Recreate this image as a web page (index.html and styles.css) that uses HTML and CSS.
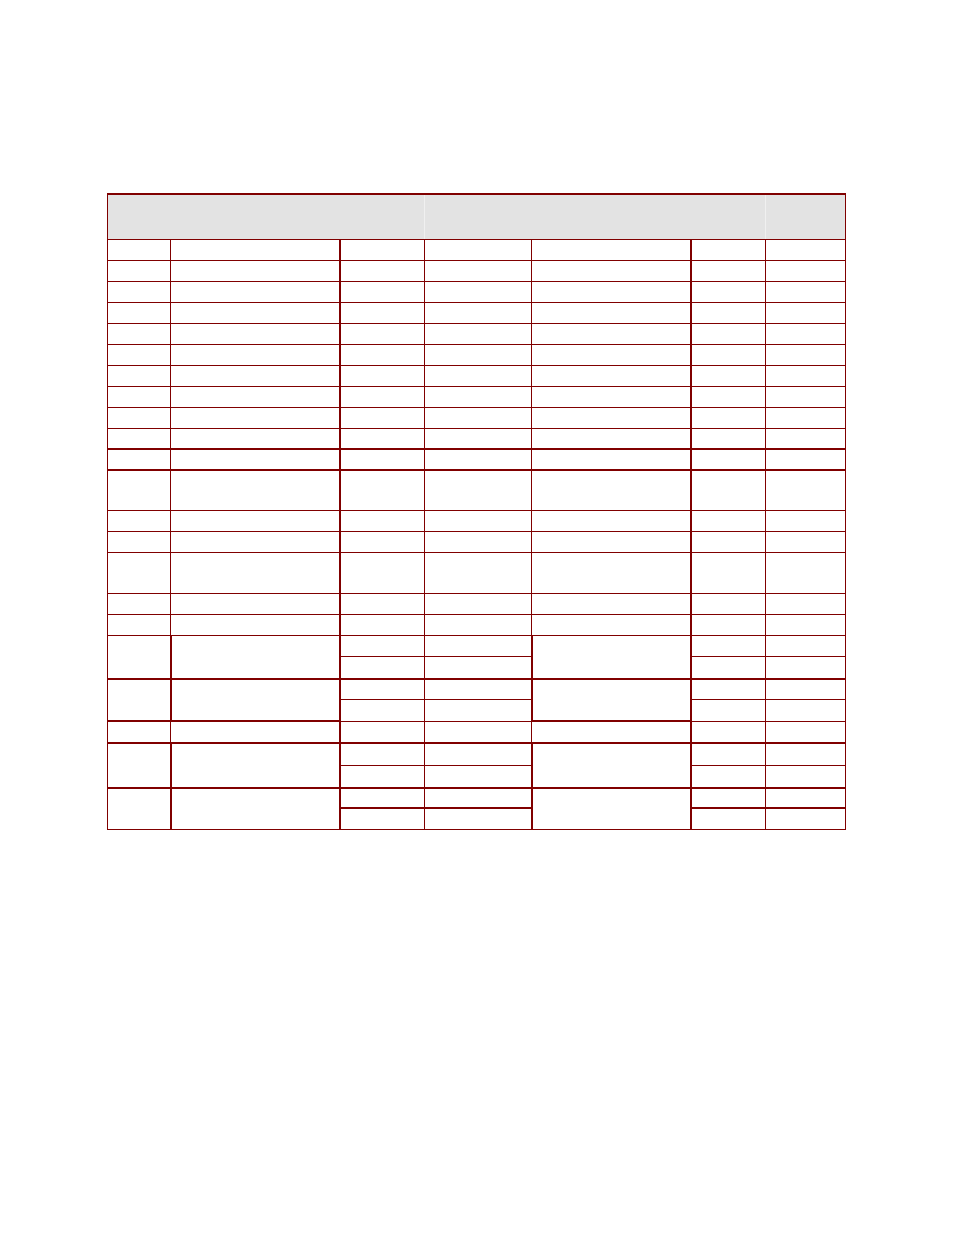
FILE: index.html
```html
<!DOCTYPE html>
<html>
<head>
<meta charset="utf-8">
<title>Table</title>
<link rel="stylesheet" href="styles.css">
</head>
<body>
<table class="sheet">
  <colgroup>
    <col class="w1"><col class="w2"><col class="w3"><col class="w4"><col class="w5"><col class="w6"><col class="w7">
  </colgroup>
  <tr class="head">
    <td colspan="3" class="hl"></td>
    <td colspan="3" class="hm"></td>
    <td class="hr"></td>
  </tr>
  <tr class="r1"><td></td><td></td><td class="L"></td><td></td><td></td><td class="L"></td><td></td></tr>
  <tr class="r1"><td></td><td></td><td class="L"></td><td></td><td></td><td class="L"></td><td></td></tr>
  <tr class="r1"><td></td><td></td><td class="L"></td><td></td><td></td><td class="L"></td><td></td></tr>
  <tr class="r1"><td></td><td></td><td class="L"></td><td></td><td></td><td class="L"></td><td></td></tr>
  <tr class="r1"><td></td><td></td><td class="L"></td><td></td><td></td><td class="L"></td><td></td></tr>
  <tr class="r1"><td></td><td></td><td class="L"></td><td></td><td></td><td class="L"></td><td></td></tr>
  <tr class="r1"><td></td><td></td><td class="L"></td><td></td><td></td><td class="L"></td><td></td></tr>
  <tr class="r1"><td></td><td></td><td class="L"></td><td></td><td></td><td class="L"></td><td></td></tr>
  <tr class="r1"><td></td><td></td><td class="L"></td><td></td><td></td><td class="L"></td><td></td></tr>
  <tr class="r10 thickb"><td></td><td></td><td class="L"></td><td></td><td></td><td class="L"></td><td></td></tr>
  <tr class="r11 thickb"><td></td><td></td><td class="L"></td><td></td><td></td><td class="L"></td><td></td></tr>
  <tr class="r12"><td></td><td></td><td class="L"></td><td></td><td></td><td class="L"></td><td></td></tr>
  <tr class="r1"><td></td><td></td><td class="L"></td><td></td><td></td><td class="L"></td><td></td></tr>
  <tr class="r1"><td></td><td></td><td class="L"></td><td></td><td></td><td class="L"></td><td></td></tr>
  <tr class="r15"><td></td><td></td><td class="L"></td><td></td><td></td><td class="L"></td><td></td></tr>
  <tr class="r1"><td></td><td></td><td class="L"></td><td></td><td></td><td class="L"></td><td></td></tr>
  <tr class="r1"><td></td><td></td><td class="L"></td><td></td><td></td><td class="L"></td><td></td></tr>

  <tr class="r18"><td rowspan="2" class="R B"></td><td rowspan="2" class="R B"></td><td class="L"></td><td></td><td rowspan="2" class="L R B"></td><td class="L"></td><td></td></tr>
  <tr class="r19"><td class="L B"></td><td class="B"></td><td class="L B"></td><td class="B"></td></tr>

  <tr class="r20"><td rowspan="2" class="R B"></td><td rowspan="2" class="R B"></td><td class="L"></td><td></td><td rowspan="2" class="L R B"></td><td class="L"></td><td></td></tr>
  <tr class="r21"><td class="L"></td><td></td><td class="L"></td><td></td></tr>

  <tr class="r22 thickb"><td></td><td></td><td class="L"></td><td></td><td></td><td class="L"></td><td></td></tr>

  <tr class="r23"><td rowspan="2" class="R B"></td><td rowspan="2" class="R B"></td><td class="L"></td><td></td><td rowspan="2" class="L R B"></td><td class="L"></td><td></td></tr>
  <tr class="r24"><td class="L B"></td><td class="B"></td><td class="L B"></td><td class="B"></td></tr>

  <tr class="r25"><td rowspan="2" class="R"></td><td rowspan="2" class="R"></td><td class="L B"></td><td class="B"></td><td rowspan="2" class="L R"></td><td class="L B"></td><td class="B"></td></tr>
  <tr class="r26"><td class="L"></td><td></td><td class="L"></td><td></td></tr>
</table>
</body>
</html>
```

FILE: styles.css
```css
html, body {
  margin: 0;
  padding: 0;
  background: #ffffff;
}

.sheet {
  border-collapse: collapse;
  table-layout: fixed;
  width: 739px;
  margin: 193px 0 0 107px;
}

.w1 { width: 63px; }
.w2 { width: 169px; }
.w3 { width: 85px; }
.w4 { width: 107px; }
.w5 { width: 159px; }
.w6 { width: 75px; }
.w7 { width: 80px; }

.sheet td {
  border: 1px solid #800000;
  padding: 0;
  font-size: 0;
  line-height: 0;
}

.head td {
  background: #e3e3e3;
  border-top: 2px solid #800000;
  height: 44px;
}

.head .hl { border-right: 1px solid #f0f0f0; }
.head .hm { border-left: 1px solid #f0f0f0; border-right: 1px solid #f0f0f0; }
.head .hr { border-left: 1px solid #f0f0f0; }

.r1 td { height: 20px; }
.r10 td { height: 18.5px; }
.r11 td { height: 19px; }
.r12 td { height: 39.5px; }
.r15 td { height: 40px; }
.r18 td { height: 20px; }
.r19 td { height: 20.5px; }
.r20 td { height: 19.5px; }
.r21 td { height: 20.5px; }
.r22 td { height: 20px; }
.r23 td { height: 20.5px; }
.r24 td { height: 21.5px; }
.r25 td { height: 18px; }
.r26 td { height: 19.5px; }

.sheet td[rowspan] { height: auto; }

.sheet td.L { border-left-width: 2px; }
.sheet td.R { border-right-width: 2px; }
.sheet td.B { border-bottom-width: 2px; }
.thickb td { border-bottom-width: 2px; }
```
